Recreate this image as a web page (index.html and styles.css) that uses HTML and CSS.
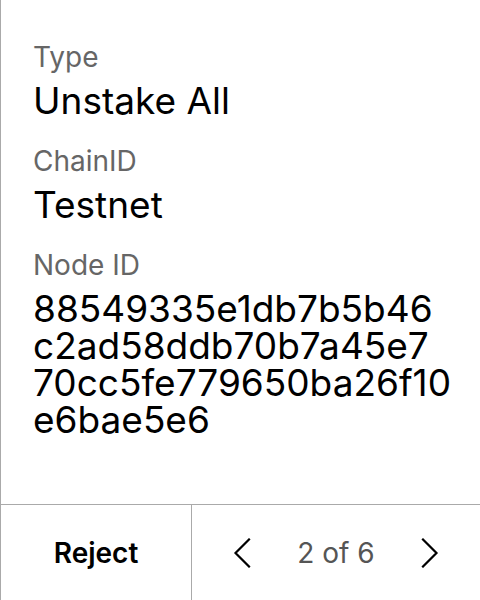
FILE: index.html
```html
<!DOCTYPE html>
<html>
<head>
<meta charset="utf-8">
<link rel="stylesheet" href="styles.css">
</head>
<body>
<div class="screen">
  <main class="details">
    <section class="field">
      <div class="label">Type</div>
      <div class="value">Unstake All</div>
    </section>
    <section class="field">
      <div class="label">ChainID</div>
      <div class="value">Testnet</div>
    </section>
    <section class="field">
      <div class="label">Node ID</div>
      <div class="value">88549335e1db7b5b46<br>c2ad58ddb70b7a45e7<br>70cc5fe779650ba26f10<br>e6bae5e6</div>
    </section>
  </main>
  <footer class="actions">
    <div class="reject">Reject</div>
    <div class="pager">
      <svg class="chev" width="18" height="30" viewBox="0 0 18 30"><path d="M16 1.5 L2.5 15 L16 28.5" fill="none" stroke="#000" stroke-width="2.2" stroke-linecap="square"/></svg>
      <span class="count">2 of 6</span>
      <svg class="chev" width="18" height="30" viewBox="0 0 18 30"><path d="M2 1.5 L15.5 15 L2 28.5" fill="none" stroke="#000" stroke-width="2.2" stroke-linecap="square"/></svg>
    </div>
  </footer>
</div>
</body>
</html>
```
FILE: styles.css
```css
* { box-sizing: border-box; }
html, body { margin: 0; padding: 0; background: #fff; }
body { font-family: Inter, "Noto Sans", sans-serif; color: #000; }
.screen {
  width: 480px;
  height: 600px;
  display: flex;
  flex-direction: column;
  border-left: 1px solid #aaa;
}
.details {
  flex: 1;
  padding: 40px 8px 0 32px;
  display: flex;
  flex-direction: column;
  gap: 25px;
}
.field { display: flex; flex-direction: column; }
.label {
  font-size: 28px;
  line-height: 34px;
  color: #666;
  margin-bottom: 8px;
}
.value {
  font-size: 37px;
  line-height: 37px;
  color: #000;
  white-space: nowrap;
}
.actions {
  height: 96px;
  border-top: 1px solid #aaa;
  display: flex;
}
.reject {
  width: 191px;
  border-right: 1px solid #aaa;
  display: flex;
  align-items: center;
  justify-content: center;
  font-size: 28px;
  font-weight: 600;
}
.pager {
  flex: 1;
  display: flex;
  align-items: center;
  justify-content: space-between;
  padding: 0 41px 0 41px;
}
.count { font-size: 28px; color: #555; }
.chev { display: block; }
```
